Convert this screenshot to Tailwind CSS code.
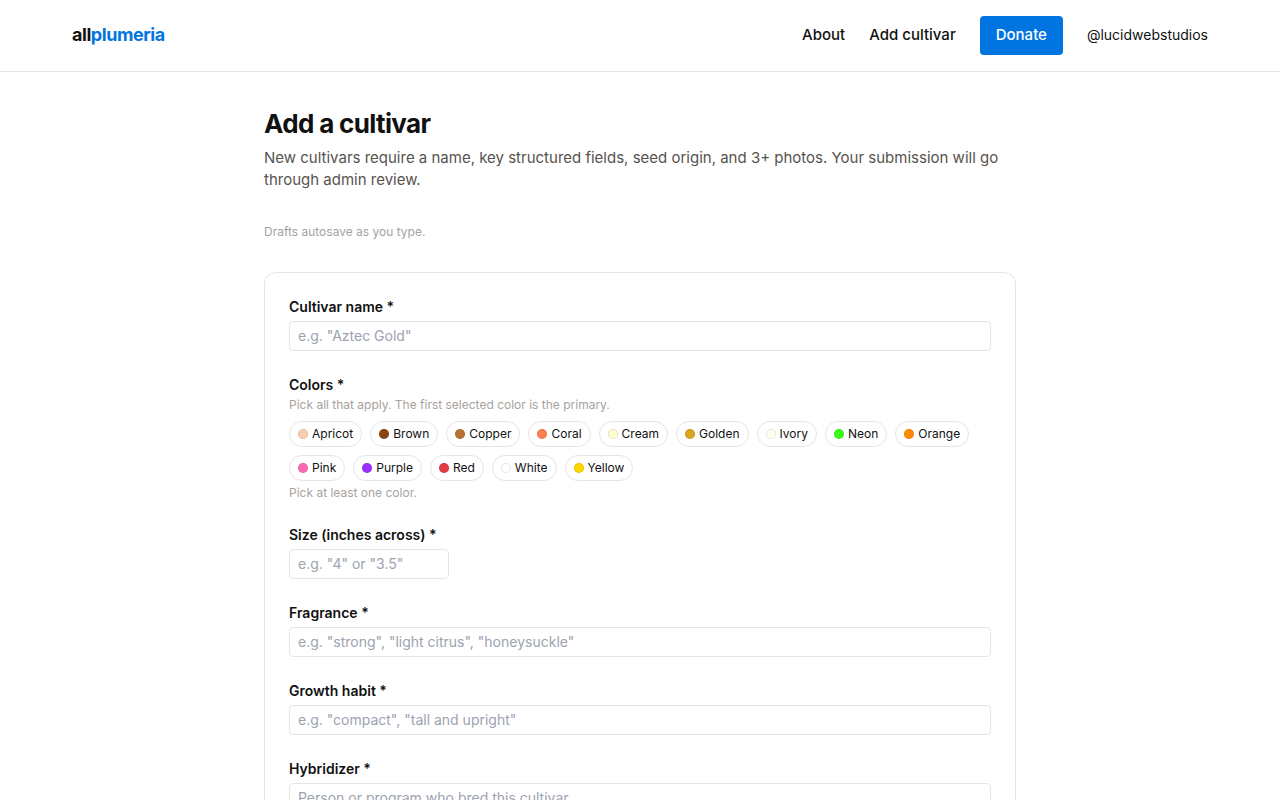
<!DOCTYPE html>
<html lang="en">
<head>
    <meta charset="UTF-8">
    <meta name="viewport" content="width=device-width, initial-scale=1.0">
    <title>Add a cultivar - allplumeria</title>
    <script src="https://cdn.jsdelivr.net/npm/@tailwindcss/browser@4"></script>
</head>
<body class="bg-white font-['Inter',sans-serif] text-[15px] leading-normal text-[#111111]">

    <!-- Header -->
    <header class="border-b border-[#e5e5e5]">
        <div class="mx-auto flex max-w-[1200px] items-center justify-between px-8 py-4">
            <a href="#" class="text-lg font-bold tracking-tight">all<span class="text-[#0074e0]">plumeria</span></a>
            <nav class="flex items-center gap-6 font-medium">
                <a href="#">About</a>
                <a href="#">Add cultivar</a>
                <a href="#" class="rounded bg-[#0074e0] px-4 py-2 text-white">Donate</a>
                <a href="#" class="text-sm font-normal">@lucidwebstudios</a>
            </nav>
        </div>
    </header>

    <main class="mx-auto max-w-[816px] px-8 py-8">
        <h1 class="text-[26px] leading-normal font-bold tracking-tight">Add a cultivar</h1>
        <p class="mt-1 text-[#57534e]">New cultivars require a name, key structured fields, seed origin, and 3+ photos. Your submission will go through admin review.</p>
        <p class="mt-8 text-xs text-[#a8a29e]">Drafts autosave as you type.</p>

        <form class="mt-8 flex flex-col gap-6 rounded-xl border border-[#e5e5e5] p-6">
            <div class="flex flex-col gap-1">
                <label for="name" class="text-sm font-semibold">Cultivar name *</label>
                <input id="name" type="text" placeholder='e.g. "Aztec Gold"' class="rounded border border-[#e5e5e5] px-2 py-1 text-sm placeholder:text-[#9ca3af]">
            </div>

            <!-- Color chips -->
            <fieldset>
                <legend class="text-sm font-semibold">Colors *</legend>
                <p class="mt-0.5 text-xs text-[#a8a29e]">Pick all that apply. The first selected color is the primary.</p>
                <div class="mt-2 flex flex-wrap gap-2 text-xs">
                    <button type="button" class="flex items-center gap-1 rounded-full border border-[#e5e5e5] px-2 py-1"><span class="size-2.5 rounded-full border border-black/10 bg-[#fbceb1]"></span>Apricot</button>
                    <button type="button" class="flex items-center gap-1 rounded-full border border-[#e5e5e5] px-2 py-1"><span class="size-2.5 rounded-full border border-black/10 bg-[#8b4513]"></span>Brown</button>
                    <button type="button" class="flex items-center gap-1 rounded-full border border-[#e5e5e5] px-2 py-1"><span class="size-2.5 rounded-full border border-black/10 bg-[#b87333]"></span>Copper</button>
                    <button type="button" class="flex items-center gap-1 rounded-full border border-[#e5e5e5] px-2 py-1"><span class="size-2.5 rounded-full border border-black/10 bg-[#ff7f50]"></span>Coral</button>
                    <button type="button" class="flex items-center gap-1 rounded-full border border-[#e5e5e5] px-2 py-1"><span class="size-2.5 rounded-full border border-black/10 bg-[#fffdd0]"></span>Cream</button>
                    <button type="button" class="flex items-center gap-1 rounded-full border border-[#e5e5e5] px-2 py-1"><span class="size-2.5 rounded-full border border-black/10 bg-[#daa520]"></span>Golden</button>
                    <button type="button" class="flex items-center gap-1 rounded-full border border-[#e5e5e5] px-2 py-1"><span class="size-2.5 rounded-full border border-black/10 bg-[#fffff0]"></span>Ivory</button>
                    <button type="button" class="flex items-center gap-1 rounded-full border border-[#e5e5e5] px-2 py-1"><span class="size-2.5 rounded-full border border-black/10 bg-[#39ff14]"></span>Neon</button>
                    <button type="button" class="flex items-center gap-1 rounded-full border border-[#e5e5e5] px-2 py-1"><span class="size-2.5 rounded-full border border-black/10 bg-[#ff8c00]"></span>Orange</button>
                    <button type="button" class="flex items-center gap-1 rounded-full border border-[#e5e5e5] px-2 py-1"><span class="size-2.5 rounded-full border border-black/10 bg-[#ff69b4]"></span>Pink</button>
                    <button type="button" class="flex items-center gap-1 rounded-full border border-[#e5e5e5] px-2 py-1"><span class="size-2.5 rounded-full border border-black/10 bg-[#9b30ff]"></span>Purple</button>
                    <button type="button" class="flex items-center gap-1 rounded-full border border-[#e5e5e5] px-2 py-1"><span class="size-2.5 rounded-full border border-black/10 bg-[#e63946]"></span>Red</button>
                    <button type="button" class="flex items-center gap-1 rounded-full border border-[#e5e5e5] px-2 py-1"><span class="size-2.5 rounded-full border border-black/10 bg-white"></span>White</button>
                    <button type="button" class="flex items-center gap-1 rounded-full border border-[#e5e5e5] px-2 py-1"><span class="size-2.5 rounded-full border border-black/10 bg-[#ffd700]"></span>Yellow</button>
                </div>
                <p class="mt-1 text-xs text-[#a8a29e]">Pick at least one color.</p>
            </fieldset>

            <div class="flex flex-col gap-1">
                <label for="size" class="text-sm font-semibold">Size (inches across) *</label>
                <input id="size" type="text" placeholder='e.g. "4" or "3.5"' class="w-40 rounded border border-[#e5e5e5] px-2 py-1 text-sm placeholder:text-[#9ca3af]">
            </div>

            <div class="flex flex-col gap-1">
                <label for="fragrance" class="text-sm font-semibold">Fragrance *</label>
                <input id="fragrance" type="text" placeholder='e.g. "strong", "light citrus", "honeysuckle"' class="rounded border border-[#e5e5e5] px-2 py-1 text-sm placeholder:text-[#9ca3af]">
            </div>

            <div class="flex flex-col gap-1">
                <label for="habit" class="text-sm font-semibold">Growth habit *</label>
                <input id="habit" type="text" placeholder='e.g. "compact", "tall and upright"' class="rounded border border-[#e5e5e5] px-2 py-1 text-sm placeholder:text-[#9ca3af]">
            </div>

            <div class="flex flex-col gap-1">
                <label for="hybridizer" class="text-sm font-semibold">Hybridizer *</label>
                <input id="hybridizer" type="text" placeholder="Person or program who bred this cultivar" class="rounded border border-[#e5e5e5] px-2 py-1 text-sm placeholder:text-[#9ca3af]">
            </div>
        </form>
    </main>

</body>
</html>
